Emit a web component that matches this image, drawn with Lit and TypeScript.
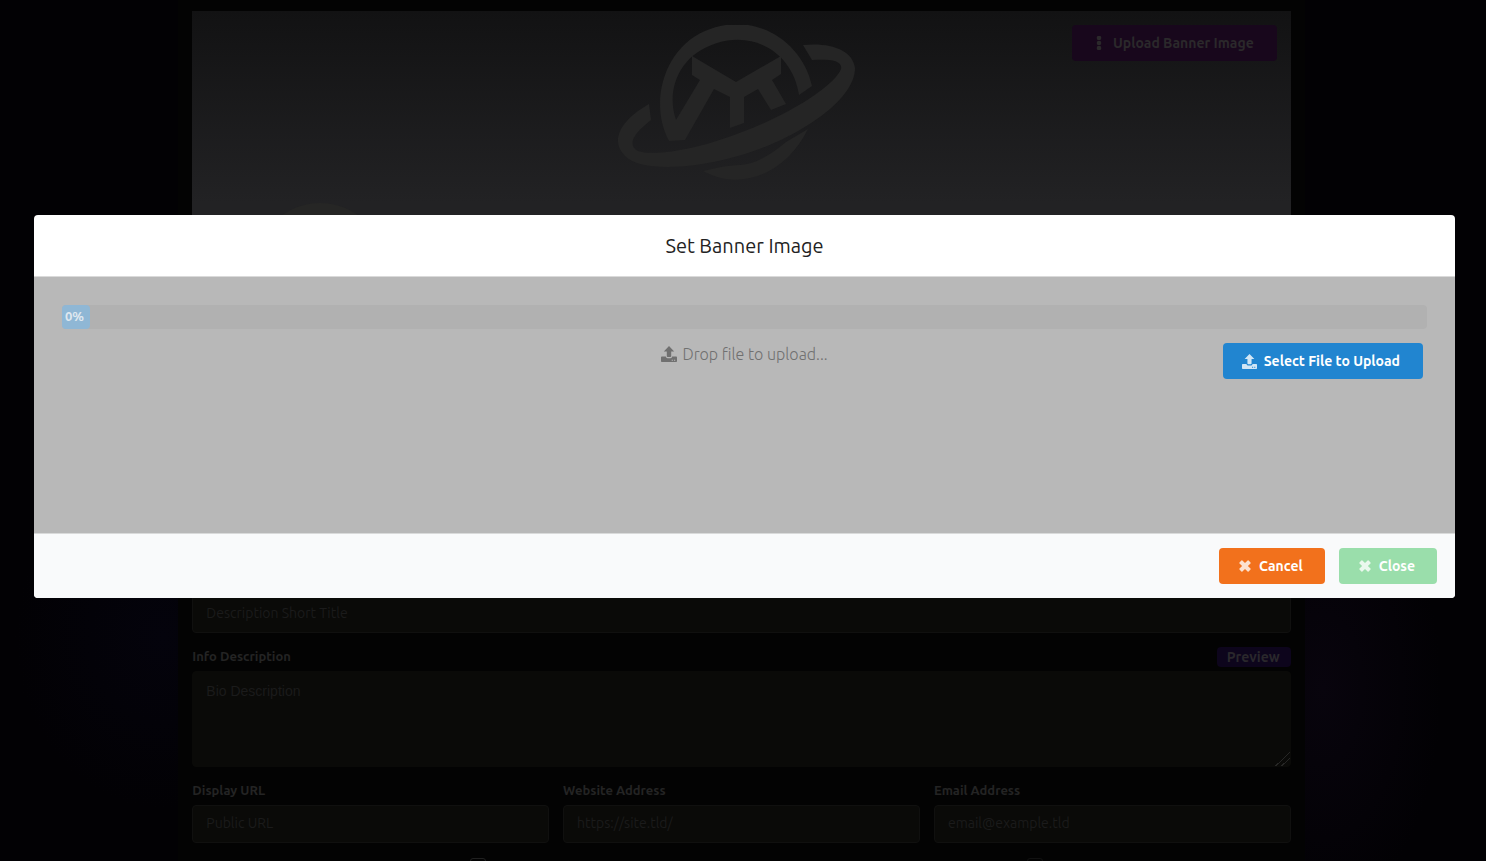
import { LitElement, html, css } from "lit";
import { customElement } from "lit/decorators.js";

const uploadIcon = html`<svg class="icon upload" viewBox="0 0 16 16" aria-hidden="true">
  <path fill="currentColor" fill-rule="evenodd" d="M8 0 13.2 5.4H10.2V10.2q0 .8-.8.8H6.6q-.8 0-.8-.8V5.4H2.8ZM.8 10.6H4.8Q5 12.2 6.6 12.2H9.4Q11 12.2 11.2 10.6H15.2q.8 0 .8.8V15.2q0 .8-.8.8H.8Q0 16 0 15.2V11.4q0-.8.8-.8ZM10.7 13.7v1h1.2v-1ZM13 13.7v1h1.2v-1Z"/>
</svg>`;

const crossIcon = html`<svg class="icon cross" viewBox="0 0 12 12" aria-hidden="true">
  <path fill="currentColor" d="M3.4.5 6 3.1 8.6.5Q9.1 0 9.6.5L11.5 2.4Q12 2.9 11.5 3.4L8.9 6 11.5 8.6Q12 9.1 11.5 9.6L9.6 11.5Q9.1 12 8.6 11.5L6 8.9 3.4 11.5Q2.9 12 2.4 11.5L.5 9.6Q0 9.1.5 8.6L3.1 6 .5 3.4Q0 2.9.5 2.4L2.4.5Q2.9 0 3.4.5Z"/>
</svg>`;

@customElement("app-root")
export class AppRoot extends LitElement {
  static styles = css`
    :host {
      display: block;
      position: relative;
      height: 100vh;
      overflow: hidden;
      background:
        radial-gradient(ellipse 8% 26% at 89% 80%, #08040d, transparent),
        radial-gradient(ellipse 10% 20% at 11% 74%, #04030c, transparent),
        #020104;
      color: #242424;
      font: 14px/20px Ubuntu, Roboto, sans-serif;
    }
    * { box-sizing: border-box; }
    button, input { font: inherit; }
    button {
      display: inline-flex;
      align-items: center;
      border: 0;
      border-radius: 4px;
      font-weight: 700;
      color: #fff;
      cursor: pointer;
    }
    .page {
      height: 100%;
      overflow: hidden;
      margin: 0 12.2% 0 12%;
      padding: 11px 14px 0;
      background: #030303;
      display: flex;
      flex-direction: column;
    }
    .banner {
      flex: none;
      display: grid;
      grid-template-columns: 1fr 252px 1fr;
      align-items: start;
      height: 240px;
      padding: 14px;
      background: linear-gradient(#121213, #222224 80%);
      position: relative;
      overflow: hidden;
    }
    .logo { grid-column: 2; display: block; width: 252px; height: 156px; }
    .banner-button {
      justify-self: end;
      height: 36px;
      padding: 0 23px 0 22px;
      gap: 9px;
      background: #18071c;
      color: #2b292b;
    }
    .dots { width: 10px; height: 14px; }
    .avatar {
      position: absolute;
      left: 64px;
      top: 192px;
      width: 128px;
      height: 128px;
      border-radius: 50%;
      background: #262625;
    }
    .form { display: flex; flex-direction: column; gap: 14px; margin-top: 344px; }
    .field { display: flex; flex-direction: column; gap: 6px; min-width: 0; }
    .field.about { gap: 4px; }
    .row { display: flex; align-items: flex-start; justify-content: space-between; }
    .name { font-size: 13px; font-weight: 700; line-height: 18px; color: #242424; }
    .box {
      width: 100%;
      height: 38px;
      padding: 0 13px 2px;
      border: 1px solid #10100f;
      border-radius: 4px;
      background: #0a0a08;
      color: #1b1b1b;
      outline: 0;
    }
    textarea.box {
      display: block;
      height: 96px;
      padding: 9px 13px;
      border-color: #0a0a08;
      font: 14px/20px "Liberation Sans", sans-serif;
    }
    textarea.box::-webkit-resizer {
      background: linear-gradient(135deg, transparent 50%, #262625 50% 55%, transparent 55% 70%, #262625 70% 75%, transparent 75%);
    }
    .box::placeholder { color: #1b1b1b; opacity: 1; }
    .preview { height: 20px; padding: 0 11px 0 10px; background: #0d051c; color: #2a282c; }
    .columns { display: grid; grid-template-columns: repeat(3, 1fr); gap: 14px; }
    .checks { display: grid; grid-template-columns: repeat(4, 1fr); gap: 14px; }
    .check {
      grid-column: 2;
      display: flex;
      align-items: center;
      gap: 10px;
      font-size: 13px;
      line-height: 18px;
      font-weight: 700;
    }
    .check input { appearance: none; width: 16px; height: 16px; margin: 0; border: 1px solid #202020; border-radius: 3px; }
    .check.dim { grid-column: 4; color: #111; }
    .check.dim input { border-color: #111; }

    .modal {
      position: absolute;
      top: 215px;
      left: 34px;
      right: 31px;
      border-radius: 4px;
      overflow: hidden;
      background: #fff;
    }
    .title {
      margin: 0;
      padding: 18px 20px;
      border-bottom: 1px solid #dadada;
      text-align: center;
      font-size: 20px;
      line-height: 25px;
      font-weight: 400;
      color: #222;
    }
    .content { min-height: 256px; padding: 28px; background: #b8b8b8; }
    .bar { height: 24px; border-radius: 4px; background: #b1b1b1; }
    .fill {
      width: 28px;
      height: 24px;
      padding-left: 3px;
      border-radius: 4px;
      background: #8fb7d5;
      color: #dfe8ef;
      font-size: 13px;
      line-height: 22px;
      font-weight: 700;
    }
    .drop { display: grid; grid-template-columns: 1fr auto 1fr; align-items: start; padding: 14px 4px 0; }
    .hint {
      grid-column: 2;
      display: flex;
      align-items: center;
      gap: 5px;
      color: #707070;
      font-size: 16px;
      line-height: 22px;
      font-weight: 300;
    }
    .icon { flex: none; }
    .upload { width: 16px; height: 16px; }
    .cross { width: 12px; height: 12px; }
    .action { height: 36px; padding: 0 22px 0 20px; gap: 8px; }
    .action .icon { opacity: .8; }
    .action .upload { width: 15px; height: 15px; }
    .select { justify-self: end; background: #2185d0; gap: 7px; padding: 0 23px 0 19px; }
    .cancel { background: #f2711c; }
    .close { background: #9adeab; }
    .footer {
      display: flex;
      justify-content: flex-end;
      gap: 14px;
      padding: 14px 18px;
      border-top: 1px solid #d9dada;
      background: #f9fafb;
    }
  `;

  private field(id: string, label: string, hint: string) {
    return html`<div class="field">
      <label class="name" for=${id}>${label}</label>
      <input class="box" id=${id} placeholder=${hint} />
    </div>`;
  }

  render() {
    return html`
      <main class="page">
        <section class="banner">
          <svg class="logo" viewBox="615 25 252 156" aria-hidden="true">
            <path fill="#252525" d="M668 141C648 104 662 49 704 31C752 10 801 40 811 86L798 95C792 54 755 31 716 43C677 55 665 91 675 120L699 80L691 75V56L735 82L780 56V74L771 80L785 104L770 110L757 89L743 97V123L729 128V97L713 89L684 140Z"/>
            <path fill="#252525" d="M802 45C829 42 852 50 854 68C854 102 793 139 744 154C689 171 638 171 624 156C607 139 623 118 648 104L650 120C632 134 626 145 637 151C655 157 701 148 741 132C790 114 834 85 840 69C842 60 828 59 811 60Z"/>
            <path fill="#252525" d="M702 171Q725 165 739 165Q759 164 785 142L807 129C785 174 739 192 702 171Z"/>
          </svg>
          <button class="banner-button" type="button">
            <svg class="dots" viewBox="0 0 10 14" aria-hidden="true">
              <g fill="currentColor"><circle cx="5" cy="2" r="2.3"/><circle cx="5" cy="7" r="2.3"/><circle cx="5" cy="12" r="2.3"/></g>
            </svg>
            Upload Banner Image
          </button>
          <div class="avatar"></div>
        </section>
        <form class="form">
          <input class="box" aria-label="Description Short Title" placeholder="Description Short Title" />
          <div class="field about">
            <div class="row">
              <label class="name" for="bio">Info Description</label>
              <button class="preview" type="button">Preview</button>
            </div>
            <textarea class="box" id="bio" placeholder="Bio Description"></textarea>
          </div>
          <div class="columns">
            ${this.field("url", "Display URL", "Public URL")}
            ${this.field("site", "Website Address", "https://site.tld/")}
            ${this.field("email", "Email Address", "email@example.tld")}
          </div>
          <div class="checks">
            <label class="check"><input type="checkbox" />Show on Sidebar</label>
            <label class="check dim"><input type="checkbox" />Show Social Links</label>
          </div>
        </form>
      </main>
      <section class="modal" role="dialog" aria-labelledby="title">
        <h1 class="title" id="title">Set Banner Image</h1>
        <div class="content">
          <div class="bar" role="progressbar" aria-label="Upload progress" aria-valuenow="0"><div class="fill">0%</div></div>
          <div class="drop">
            <div class="hint">${uploadIcon}<span>Drop file to upload...</span></div>
            <button class="action select" type="button">${uploadIcon}Select File to Upload</button>
          </div>
        </div>
        <footer class="footer">
          <button class="action cancel" type="button">${crossIcon}Cancel</button>
          <button class="action close" type="button">${crossIcon}Close</button>
        </footer>
      </section>
    `;
  }
}
